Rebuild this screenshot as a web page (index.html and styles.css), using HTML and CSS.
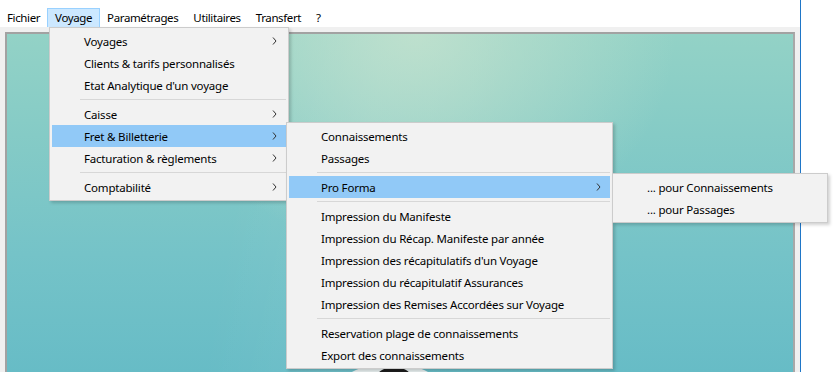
FILE: index.html
```html
<!DOCTYPE html>
<html>
  <head>
    <title>Voyage</title>
    <link rel="stylesheet" href="styles.css">
  </head>
  <body>
    <div class="app">
      <div class="menubar">
        <span class="bar-item">Fichier</span>
        <span class="bar-item open">Voyage</span>
        <span class="bar-item">Paramétrages</span>
        <span class="bar-item">Utilitaires</span>
        <span class="bar-item">Transfert</span>
        <span class="bar-item">?</span>
      </div>
      <div class="client">
        <div class="desktop">
          <div class="logo">
            <span class="logo-ring"></span>
            <span class="logo-mark"></span>
          </div>
        </div>
      </div>

      <!-- Voyage dropdown -->
      <ul class="menu menu-voyage">
        <li class="menu-item has-sub">Voyages
          <svg class="chevron" width="5" height="8" viewBox="0 0 5 8"><path d="M1 0.5 L4 4 L1 7.5" /></svg>
        </li>
        <li class="menu-item">Clients &amp; tarifs personnalisés</li>
        <li class="menu-item">Etat Analytique d'un voyage</li>
        <li class="separator"></li>
        <li class="menu-item has-sub">Caisse
          <svg class="chevron" width="5" height="8" viewBox="0 0 5 8"><path d="M1 0.5 L4 4 L1 7.5" /></svg>
        </li>
        <li class="menu-item has-sub active">Fret &amp; Billetterie
          <svg class="chevron" width="5" height="8" viewBox="0 0 5 8"><path d="M1 0.5 L4 4 L1 7.5" /></svg>
        </li>
        <li class="menu-item has-sub">Facturation &amp; règlements
          <svg class="chevron" width="5" height="8" viewBox="0 0 5 8"><path d="M1 0.5 L4 4 L1 7.5" /></svg>
        </li>
        <li class="separator"></li>
        <li class="menu-item has-sub">Comptabilité
          <svg class="chevron" width="5" height="8" viewBox="0 0 5 8"><path d="M1 0.5 L4 4 L1 7.5" /></svg>
        </li>
      </ul>

      <!-- Fret & Billetterie submenu -->
      <ul class="menu menu-fret">
        <li class="menu-item">Connaissements</li>
        <li class="menu-item">Passages</li>
        <li class="separator"></li>
        <li class="menu-item has-sub active">Pro Forma
          <svg class="chevron" width="5" height="8" viewBox="0 0 5 8"><path d="M1 0.5 L4 4 L1 7.5" /></svg>
        </li>
        <li class="separator"></li>
        <li class="menu-item">Impression du Manifeste</li>
        <li class="menu-item">Impression du Récap. Manifeste par année</li>
        <li class="menu-item">Impression des récapitulatifs d'un Voyage</li>
        <li class="menu-item">Impression du récapitulatif Assurances</li>
        <li class="menu-item">Impression des Remises Accordées sur Voyage</li>
        <li class="separator"></li>
        <li class="menu-item">Reservation plage de connaissements</li>
        <li class="menu-item">Export des connaissements</li>
      </ul>

      <!-- Pro Forma submenu -->
      <ul class="menu menu-proforma">
        <li class="menu-item">... pour Connaissements</li>
        <li class="menu-item">... pour Passages</li>
      </ul>
    </div>
  </body>
</html>
```

FILE: styles.css
```css
html,
body {
  margin: 0;
  padding: 0;
  width: 100%;
  height: 100%;
}
body {
  background: #fff;
  font-family: "Noto Sans", "Open Sans", Arial, sans-serif;
  font-size: 11.5px;
  letter-spacing: -0.2px;
  color: #000;
  overflow: hidden;
}
.app {
  position: relative;
  width: 800px;
  height: 372px;
  border-right: 1px solid #1f76c7;
  display: flex;
  flex-direction: column;
  background: #fff;
}
.menubar {
  height: 27px;
  box-sizing: border-box;
  padding-top: 8px;
  display: flex;
  align-items: stretch;
  flex-shrink: 0;
  letter-spacing: -0.38px;
}
.bar-item {
  padding: 0 7px;
  display: flex;
  align-items: center;
  border: 1px solid transparent;
  margin-left: -1px;
  line-height: 1;
}
.bar-item.open {
  background: #cce8ff;
  border-color: #99d1ff;
  border-bottom: none;
}
.client {
  flex: 1;
  background: #f0f0f0;
  padding: 5px 5px 0 5px;
  display: flex;
}
.desktop {
  flex: 1;
  position: relative;
  overflow: hidden;
  border: 2px solid #a2a2a2;
  border-bottom: none;
  border-right-color: #a8a8a8;
  background:
    radial-gradient(ellipse 260px 220px at 52% 0%, rgba(196, 226, 206, 0.85), rgba(196, 226, 206, 0) 100%),
    linear-gradient(100deg, rgba(255, 255, 255, 0) 30%, rgba(255, 255, 255, 0.06) 45%, rgba(255, 255, 255, 0) 60%),
    linear-gradient(180deg, #93d2c6 0%, #85cbc6 30%, #75c3c8 65%, #67bcc6 100%);
}
.logo {
  position: absolute;
  left: 340px;
  top: 330px;
  width: 86px;
  height: 30px;
}
.logo-ring {
  position: absolute;
  left: 0;
  top: 0;
  width: 86px;
  height: 30px;
  border-radius: 50%;
  background: #e9f1f1;
}
.logo-mark {
  position: absolute;
  left: 30px;
  top: 3px;
  width: 34px;
  height: 20px;
  border-radius: 50% 50% 40% 40%;
  background: #1d1d1d;
}
.menu {
  position: absolute;
  margin: 0;
  padding: 2px;
  list-style: none;
  background: #f2f2f2;
  border: 1px solid #cccccc;
  box-shadow: 2px 2px 3px rgba(0, 0, 0, 0.18);
}
.menu-voyage {
  left: 49px;
  top: 27px;
  width: 234px;
}
.menu-fret {
  left: 286px;
  top: 122px;
  width: 321px;
}
.menu-proforma {
  left: 612px;
  top: 173px;
  width: 210px;
}
.menu-item {
  position: relative;
  height: 22px;
  display: flex;
  align-items: center;
  padding-left: 32px;
  white-space: nowrap;
}
.menu-item.active {
  background: #91c9f7;
}
.chevron {
  position: absolute;
  right: 9px;
  top: 7px;
}
.chevron path {
  fill: none;
  stroke: #333;
  stroke-width: 1;
}
.separator {
  height: 1px;
  background: #d7d7d7;
  margin: 3px 0 3px 28px;
}
```
